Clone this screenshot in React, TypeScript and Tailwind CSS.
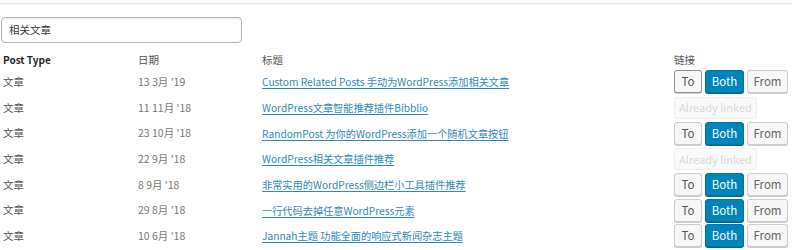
import React from "react";

type Row = {
  type: string;
  date: string;
  title: string;
  linked?: boolean;
};

const rows: Row[] = [
  { type: "文章", date: "13 3月 '19", title: "Custom Related Posts 手动为WordPress添加相关文章" },
  { type: "文章", date: "11 11月 '18", title: "WordPress文章智能推荐插件Bibblio", linked: true },
  { type: "文章", date: "23 10月 '18", title: "RandomPost 为你的WordPress添加一个随机文章按钮" },
  { type: "文章", date: "22 9月 '18", title: "WordPress相关文章插件推荐", linked: true },
  { type: "文章", date: "8 9月 '18", title: "非常实用的WordPress侧边栏小工具插件推荐" },
  { type: "文章", date: "29 8月 '18", title: "一行代码去掉任意WordPress元素" },
  { type: "文章", date: "10 6月 '18", title: "Jannah主题 功能全面的响应式新闻杂志主题" },
];

function LinkButtons({ first }: { first: boolean }) {
  return (
    <div className="flex items-center gap-[3px]">
      <button
        type="button"
        className={`h-[23px] w-[28px] rounded-[3px] border bg-[#f7f7f7] text-[11.5px] text-[#555] shadow-[0_1px_0_#ccc] ${
          first ? "border-[#8c8f94]" : "border-[#ccc]"
        }`}
      >
        To
      </button>
      <button
        type="button"
        className="h-[23px] w-[39px] rounded-[3px] border border-[#0073aa] bg-[#0085ba] text-[11.5px] text-white shadow-[0_1px_0_#006799]"
      >
        Both
      </button>
      <button
        type="button"
        className="h-[23px] w-[41px] rounded-[3px] border border-[#ccc] bg-[#f7f7f7] text-[11.5px] text-[#666] shadow-[0_1px_0_#ccc]"
      >
        From
      </button>
    </div>
  );
}

export default function App() {
  return (
    <div
      className="h-[250px] w-[794px] overflow-hidden bg-white text-[10.5px] text-[#555]"
      style={{ fontFamily: '"Noto Sans CJK SC", "Noto Sans", sans-serif' }}
    >
      <div className="mt-[3px] mr-[2px] border-t border-[#e2e2e2] shadow-[0_1px_1px_rgba(0,0,0,0.04)]" />

      <div className="ml-[1px] mt-[13px] flex h-[26px] w-[241px] items-center rounded-[4px] border border-[#b4b4b4] px-[7px] text-[10.5px] text-[#32373c] shadow-[inset_0_1px_2px_rgba(0,0,0,0.07)]">
        相关文章
      </div>

      <div className="mt-[7px]">
        <div className="grid h-[19px] grid-cols-[135px_124px_412px_1fr] items-center pl-[3px]">
          <span className="text-[10px] font-bold text-[#23282d]">Post Type</span>
          <span className="text-[#555]">日期</span>
          <span className="text-[#555]">标题</span>
          <span className="text-[#555]">链接</span>
        </div>

        {rows.map((row, i) => (
          <div
            key={row.title}
            className="grid h-[25.7px] grid-cols-[135px_124px_412px_1fr] items-center pl-[3px]"
          >
            <span className="text-[#555]">{row.type}</span>
            <span className="text-[#777]">{row.date}</span>
            <a href="#" className="w-fit text-[10.2px] text-[#2e8ab8] underline underline-offset-2">
              {row.title}
            </a>
            {row.linked ? (
              <button
                type="button"
                className="h-[22px] w-[83px] rounded-[3px] border border-[#eee] bg-[#fafafa] text-[11px] text-[#d8d8d8]"
              >
                Already linked
              </button>
            ) : (
              <LinkButtons first={i === 0} />
            )}
          </div>
        ))}
      </div>
    </div>
  );
}
